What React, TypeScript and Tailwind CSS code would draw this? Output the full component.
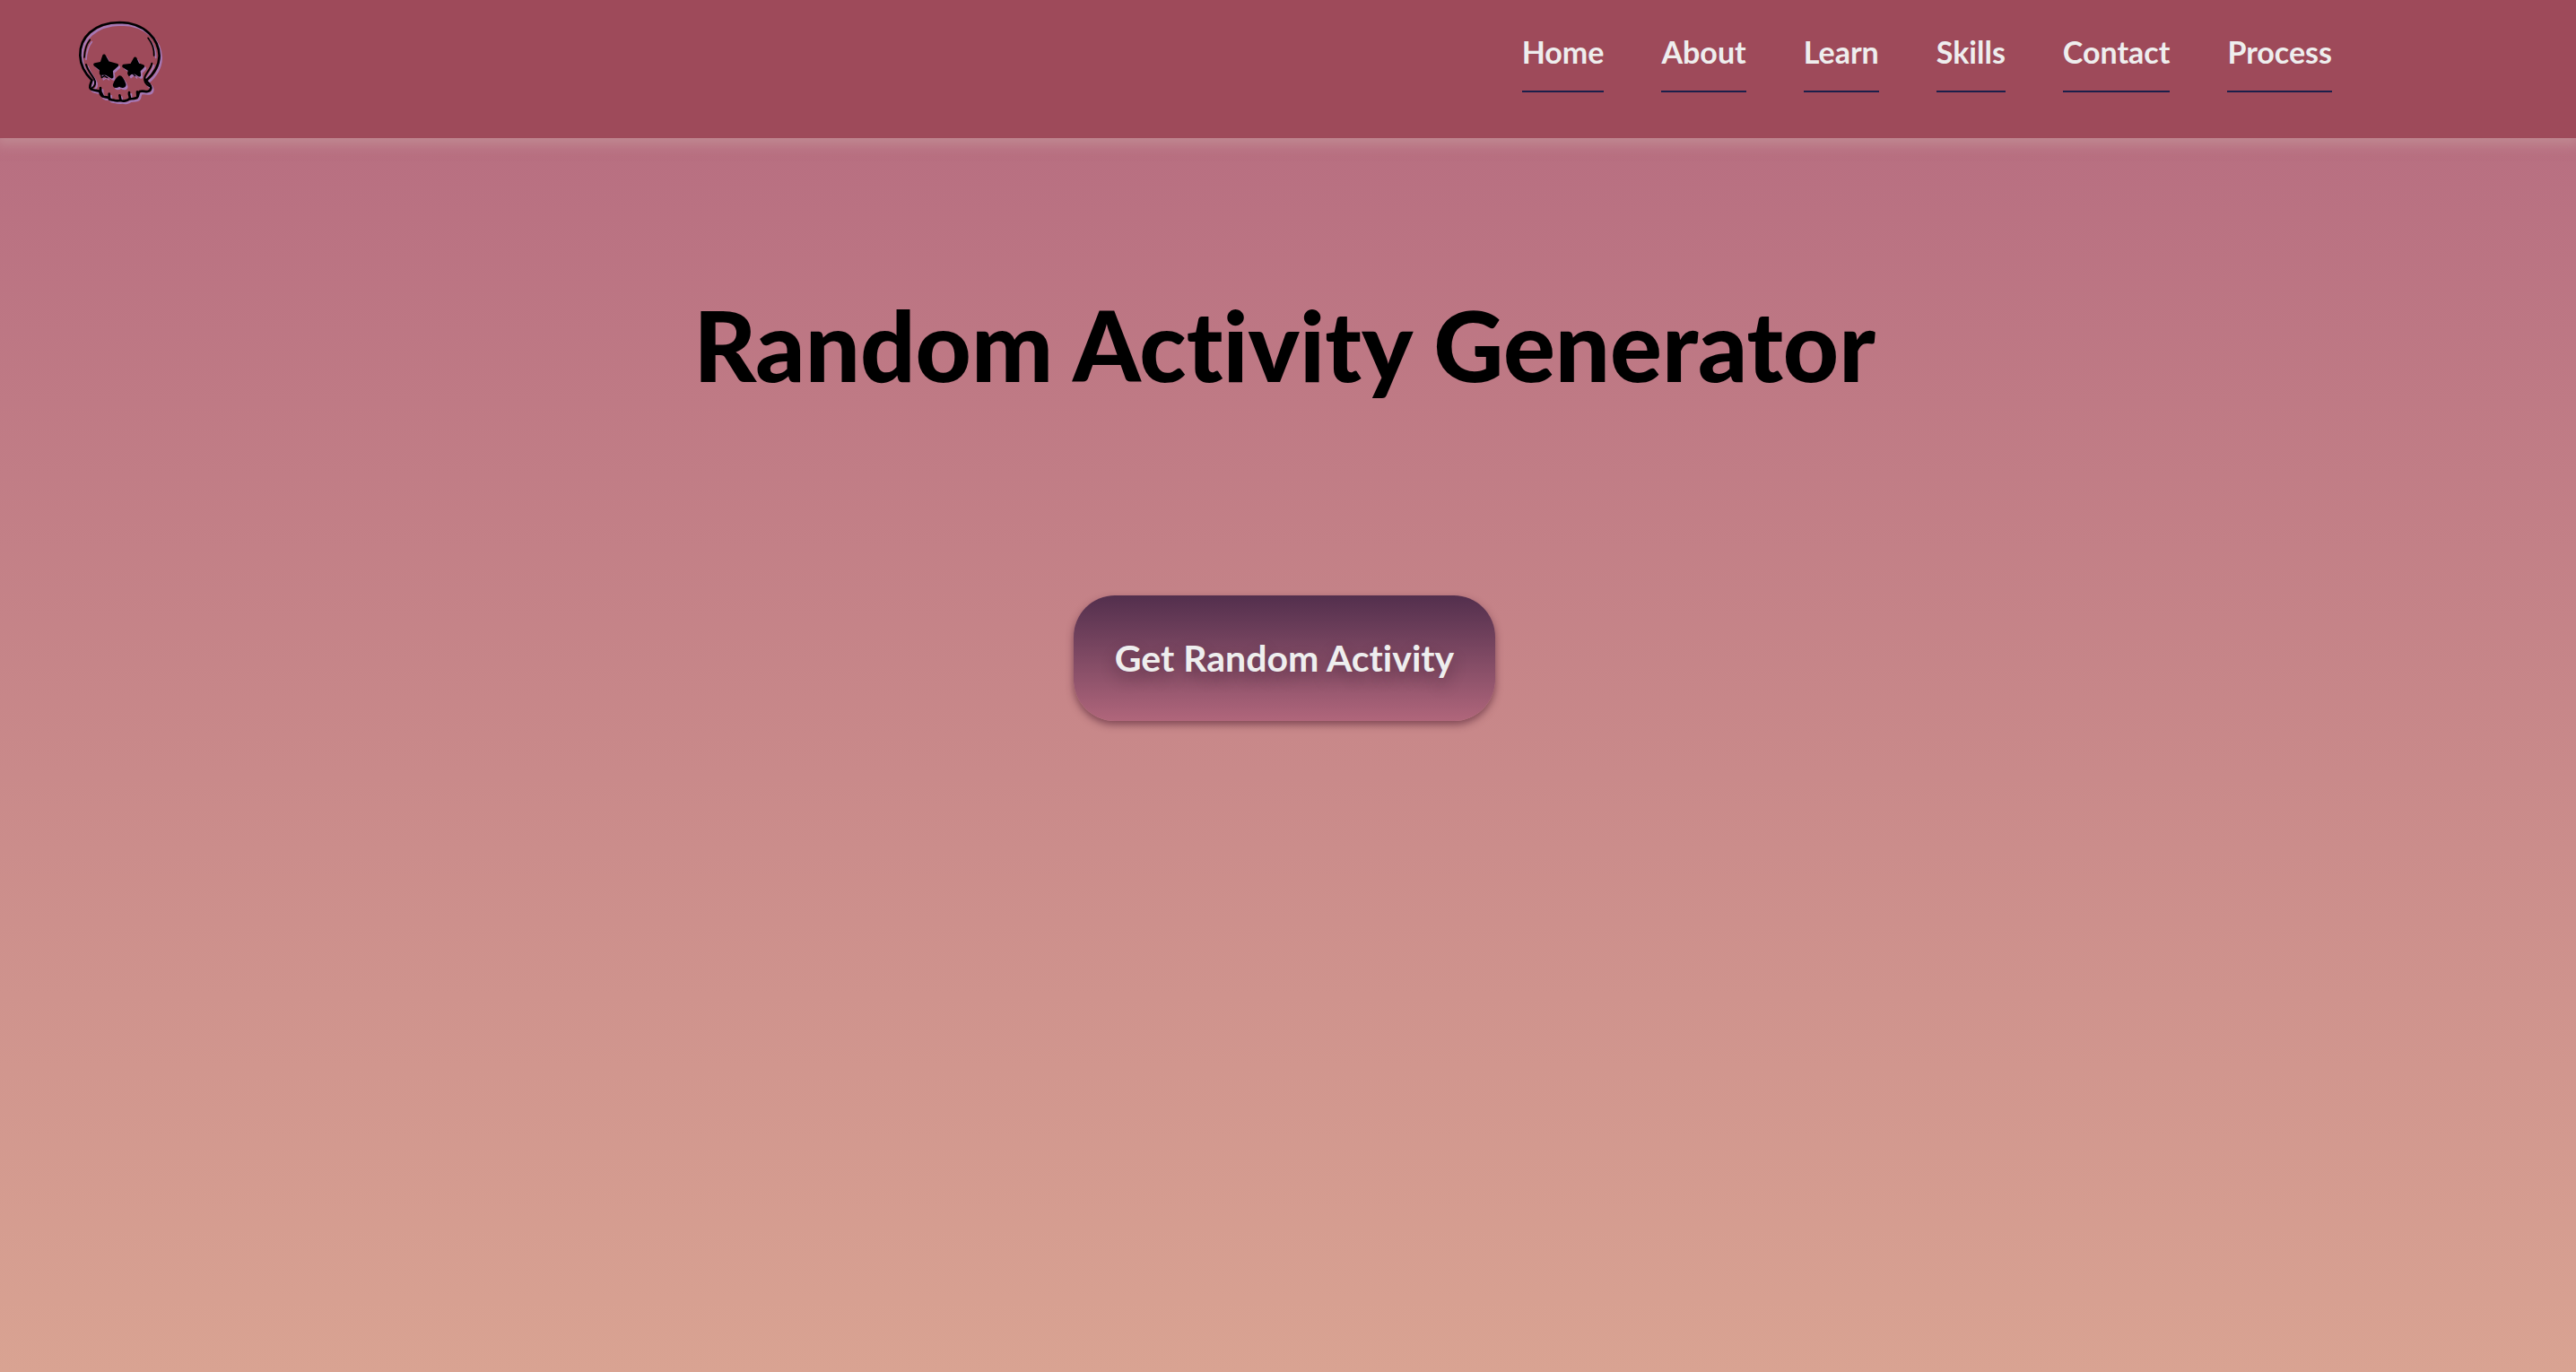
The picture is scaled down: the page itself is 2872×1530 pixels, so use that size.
const links = ["Home", "About", "Learn", "Skills", "Contact", "Process"];

function SkullShapes() {
  return (
    <>
      <g fill="none" stroke="currentColor" strokeLinecap="round" strokeLinejoin="round">
        <path
          strokeWidth="8"
          d="M97 238C96 247 90 252 91 263C93 273 110 271 123 275C125 283 127 291 135 293C141 296 148 294 154 297C156 303 163 305 171 305C178 308 187 307 194 306C203 310 216 307 222 301C232 300 245 302 250 294C254 288 252 280 257 276C267 273 275 277 284 276C293 274 298 266 293 257C291 248 281 246 277 237"
        />
        <path
          strokeWidth="8"
          d="M97 238C75 216 59 190 58 156C56 97 102 46 190 45C278 46 322 104 323 157C322 192 307 216 279 239"
        />
        <path strokeWidth="6" d="M78 186C84 207 98 221 105 235C112 246 108 259 97 265" />
        <path strokeWidth="6" d="M298 182C295 200 278 215 274 228C271 241 277 251 289 258" />
        <path strokeWidth="5" d="M91 103C78 119 73 142 72 162M285 97C300 116 306 137 305 156" />
        <path
          strokeWidth="8"
          d="M126 264C125 272 126 280 133 289M155 284L156 302M190 289L193 304M222 279C220 287 225 292 225 300M249 277L250 291"
        />
        <path strokeWidth="4" d="M128 218L130 230L139 224L149 230M219 217L222 223L232 214L242 224" />
      </g>
      <g fill="currentColor" stroke="currentColor" strokeWidth="11" strokeLinejoin="round">
        <path d="M138 157L151 180L181 188L162 205L164 227L144 215L128 216L128 202L108 186L130 182Z" />
        <path d="M242 166L251 186L268 192L254 206L256 221L240 211L222 214L224 204L204 191L230 188Z" />
        <path d="M190 228C196 228 203 244 206 253C206 259 198 261 189 253C181 260 172 260 173 254C176 246 183 232 190 228Z" />
      </g>
    </>
  );
}

function SkullLogo() {
  return (
    <svg viewBox="48 36 288 288" className="size-24" role="img" aria-label="Skull logo">
      <g className="text-[#a678b4]" transform="translate(6 7)">
        <SkullShapes />
      </g>
      <g className="text-black">
        <SkullShapes />
      </g>
    </svg>
  );
}

export default function App() {
  return (
    <div className="min-h-screen bg-linear-to-b from-[#b4697f] to-[#d9a392] font-['Lato',sans-serif] [font-variant-ligatures:none]">
      <header className="relative flex items-start justify-between bg-[#9e4a5a] pt-[22px] pr-[272px] pb-9 pl-[86px] shadow-[0_4px_12px_4px_rgba(200,160,160,0.5)]">
        <a href="#home">
          <SkullLogo />
        </a>
        <nav className="flex gap-16">
          {links.map((label) => (
            <a
              key={label}
              href={`#${label.toLowerCase()}`}
              className="border-b-2 border-[#1b1f4b] pt-[17px] pb-6 text-[34px] leading-[38px] font-bold text-[#eeeeee]"
            >
              {label}
            </a>
          ))}
        </nav>
      </header>
      <main className="flex flex-col items-center pt-[158px] pr-2">
        <h1 className="text-center text-[108px] leading-[144px] font-black text-black">Random Activity Generator</h1>
        <button
          type="button"
          className="mt-52 h-[140px] rounded-[46px] bg-linear-to-b from-[#532f4d] to-[#b0667b] px-[46px] text-[41px] font-bold text-[#eeeeee] shadow-[0_4px_8px_rgba(80,30,50,0.6)] [text-shadow:0_8px_16px_rgba(50,20,40,0.4)]"
        >
          Get Random Activity
        </button>
      </main>
    </div>
  );
}
